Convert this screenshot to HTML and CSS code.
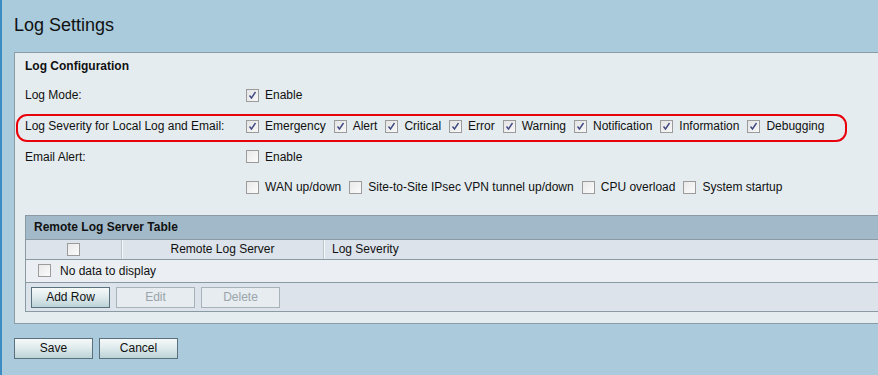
FILE: index.html
```html
<!DOCTYPE html>
<html lang="en">
<head>
  <meta charset="UTF-8">
  <title>Log Settings</title>
  <link rel="stylesheet" href="styles.css">
</head>
<body>
  <div class="page">
    <h1>Log Settings</h1>

    <div class="panel">
      <div class="panel-title">Log Configuration</div>

      <div class="form-row">
        <div class="label">Log Mode:</div>
        <div class="field">
          <span class="opt"><span class="cb checked"></span>Enable</span>
        </div>
      </div>

      <div class="form-row highlight">
        <div class="label">Log Severity for Local Log and Email:</div>
        <div class="field">
          <span class="opt"><span class="cb checked"></span>Emergency</span>
          <span class="opt"><span class="cb checked"></span>Alert</span>
          <span class="opt"><span class="cb checked"></span>Critical</span>
          <span class="opt"><span class="cb checked"></span>Error</span>
          <span class="opt"><span class="cb checked"></span>Warning</span>
          <span class="opt"><span class="cb checked"></span>Notification</span>
          <span class="opt"><span class="cb checked"></span>Information</span>
          <span class="opt"><span class="cb checked"></span>Debugging</span>
        </div>
      </div>

      <div class="form-row">
        <div class="label">Email Alert:</div>
        <div class="field">
          <span class="opt"><span class="cb"></span>Enable</span>
        </div>
      </div>

      <div class="form-row">
        <div class="label"></div>
        <div class="field">
          <span class="opt"><span class="cb"></span>WAN up/down</span>
          <span class="opt"><span class="cb"></span>Site-to-Site IPsec VPN tunnel up/down</span>
          <span class="opt"><span class="cb"></span>CPU overload</span>
          <span class="opt"><span class="cb"></span>System startup</span>
        </div>
      </div>

      <div class="table">
        <div class="table-title">Remote Log Server Table</div>
        <div class="table-head">
          <div class="col-check"><span class="cb"></span></div>
          <div class="col-server">Remote Log Server</div>
          <div class="col-severity">Log Severity</div>
        </div>
        <div class="table-empty">
          <span class="cb"></span>No data to display
        </div>
        <div class="table-actions">
          <button class="btn">Add Row</button>
          <button class="btn" disabled>Edit</button>
          <button class="btn" disabled>Delete</button>
        </div>
      </div>
    </div>

    <div class="page-actions">
      <button class="btn">Save</button>
      <button class="btn">Cancel</button>
    </div>
  </div>
</body>
</html>
```

FILE: styles.css
```css
* {
  margin: 0;
  padding: 0;
  box-sizing: border-box;
}

body {
  font-family: "Liberation Sans", Arial, sans-serif;
  font-size: 12px;
  color: #111;
  background: linear-gradient(180deg, #a9cbdc 0%, #abcbdd 100%);
  border-left: 2px solid #3a8cc2;
  min-height: 100vh;
  overflow: hidden;
}

.page {
  padding: 0 0 0 12px;
}

h1 {
  font-size: 18px;
  font-weight: normal;
  line-height: 22px;
  margin: 14px 0 16px;
  color: #111;
}

.panel {
  background: #e4ecf0;
  border: 1px solid #8c9ca5;
  margin-right: -40px;
  padding: 0 0 11px 10px;
}

.panel-title {
  font-weight: bold;
  line-height: 27px;
  height: 27px;
}

.form-row {
  display: flex;
  align-items: center;
  height: 30.7px;
}

.label {
  width: 221px;
  flex-shrink: 0;
}

.field {
  display: flex;
  align-items: center;
  white-space: nowrap;
}

.opt {
  display: inline-flex;
  align-items: center;
  margin-right: 8px;
}

.opt .cb {
  margin-right: 6px;
}

.highlight {
  position: relative;
}

.highlight::before {
  content: "";
  position: absolute;
  left: -9px;
  top: 3px;
  width: 827px;
  height: 24px;
  border: 2.5px solid #e8000c;
  border-radius: 11px;
}

.cb {
  display: inline-block;
  width: 13px;
  height: 13px;
  border: 1px solid #9b9b9b;
  background: linear-gradient(135deg, #e9e9e9 0%, #fbfbfb 100%);
  flex-shrink: 0;
}

.cb.checked {
  background-image: url("data:image/svg+xml,%3Csvg xmlns='http://www.w3.org/2000/svg' width='11' height='11'%3E%3Cpath d='M2.5 5.5 L4.5 8 L8.5 2' fill='none' stroke='%23404a80' stroke-width='1.4'/%3E%3C/svg%3E"), linear-gradient(135deg, #e4e4e4 0%, #f8f8f8 100%);
  background-repeat: no-repeat;
  background-position: center;
}

.table {
  margin-top: 12px;
  border: 1px solid #8a9aa3;
}

.table-title {
  background: #a2b9c9;
  font-weight: bold;
  height: 24px;
  line-height: 23px;
  padding-left: 8px;
  border-bottom: 1px solid #8a9aa3;
}

.table-head {
  display: flex;
  height: 20px;
  line-height: 19px;
  background: #dce3eb;
  border-bottom: 1px solid #8a9aa3;
}

.col-check {
  width: 95px;
  display: flex;
  align-items: center;
  justify-content: center;
}

.col-server {
  width: 202px;
  text-align: center;
  border-left: 1px solid #bcc6ce;
  box-shadow: inset 1px 0 0 #f4f6f8;
}

.col-severity {
  flex: 1;
  padding-left: 8px;
  border-left: 1px solid #bcc6ce;
  box-shadow: inset 1px 0 0 #f4f6f8;
}

.table-empty {
  display: flex;
  align-items: center;
  height: 23px;
  background: #ebeff4;
  padding-left: 12px;
  border-bottom: 1px solid #8a9aa3;
}

.table-empty .cb {
  margin-right: 9px;
}

.table-actions {
  display: flex;
  gap: 6px;
  background: #dce3eb;
  padding: 4px 5px 3px;
  height: 28px;
}

.btn {
  font-family: "Liberation Sans", Arial, sans-serif;
  font-size: 12px;
  width: 79px;
  height: 21px;
  color: #111;
  border: 1px solid #58717c;
  background: linear-gradient(180deg, #f6f9f9 0%, #e0ebed 45%, #bcd3d8 100%);
}

.btn:disabled {
  color: #9aa4aa;
  border-color: #a8b3b9;
  background: #e6ecf0;
}

.page-actions {
  display: flex;
  gap: 6px;
  margin-top: 14px;
}
```
